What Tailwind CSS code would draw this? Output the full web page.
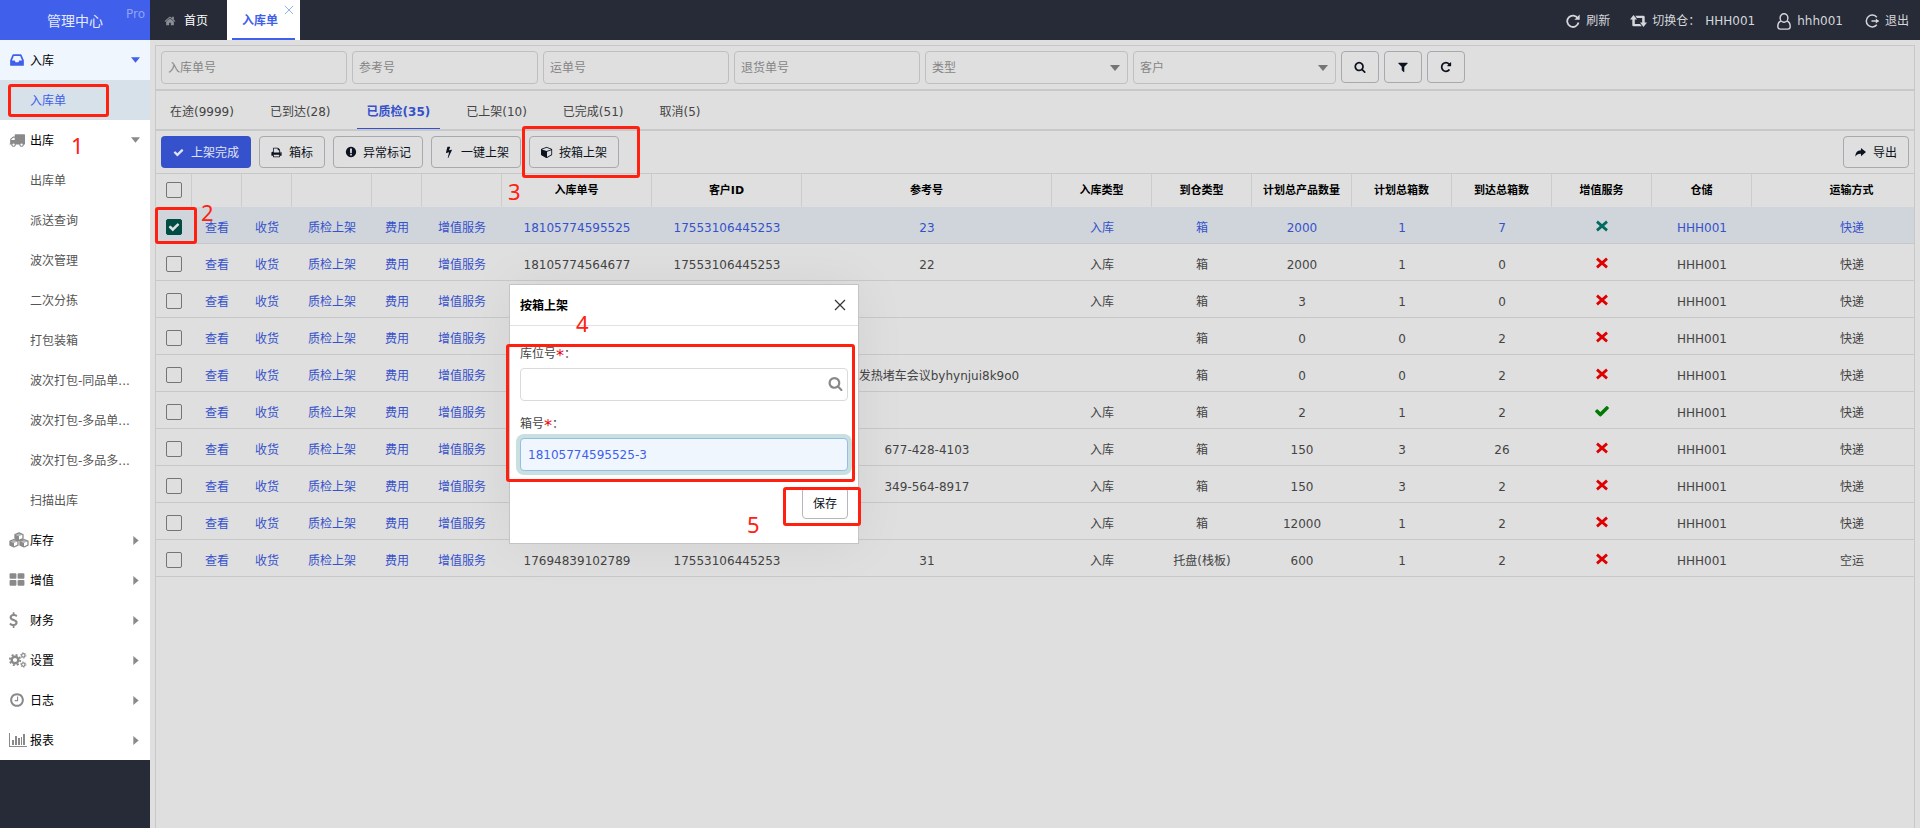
<!DOCTYPE html>
<html lang="zh-CN">
<head>
<meta charset="utf-8">
<title>管理中心</title>
<script src="https://cdn.jsdelivr.net/npm/@tailwindcss/browser@4"></script>
</head>
<body class="relative flex h-screen overflow-hidden bg-[#dfdfdf] font-['DejaVu_Sans','Noto_Sans_CJK_SC',sans-serif] text-xs text-[#444]">

<svg class="hidden" aria-hidden="true">
  <symbol id="i-home" viewBox="0 0 1792 1792"><path d="M1472 992v480q0 26-19 45t-45 19h-384v-384h-256v384h-384q-26 0-45-19t-19-45v-480q0-1 .5-3t.5-3l575-474 575 474q1 2 1 6zm223-69l-62 74q-8 9-21 11h-3q-13 0-21-7l-692-577-692 577q-12 8-24 7-13-2-21-11l-62-74q-8-10-7-23.5t11-21.5l719-599q32-26 76-26t76 26l244 204v-195q0-14 9-23t23-9h192q14 0 23 9t9 23v408l219 182q10 8 11 21.5t-7 23.5z"/></symbol>
  <symbol id="i-inbox" viewBox="0 0 1792 1792"><path d="M1151 960h316q-1-3-2.5-8t-2.5-8l-212-496h-708l-212 496q-1 2-2.5 8t-2.5 8h316l95 192h320zm513 30v482q0 26-19 45t-45 19h-1408q-26 0-45-19t-19-45v-482q0-62 25-123l238-552q10-25 36.5-42t52.5-17h832q26 0 52.5 17t36.5 42l238 552q25 61 25 123z"/></symbol>
  <symbol id="i-truck" viewBox="0 0 1792 1792"><path d="M640 1408q0-52-38-90t-90-38-90 38-38 90 38 90 90 38 90-38 38-90zm-384-512h384v-256h-158q-13 0-22 9l-195 195q-9 9-9 22v30zm1280 512q0-52-38-90t-90-38-90 38-38 90 38 90 90 38 90-38 38-90zm256-1088v1024q0 15-4 26.5t-13.5 18.5-16.5 11.5-23.5 6-22.5 2-25.5 0-22.5-.5q0 106-75 181t-181 75-181-75-75-181h-384q0 106-75 181t-181 75-181-75-75-181h-64q-3 0-22.5.5t-25.5 0-22.5-2-23.5-6-16.5-11.5-13.5-18.5-4-26.5q0-26 19-45t45-19v-320q0-8-.5-35t0-38 2.5-34.5 6.5-37 14-30.5 22.5-30l198-198q19-19 50.5-32t58.5-13h160v-192q0-26 19-45t45-19h1024q26 0 45 19t19 45z"/></symbol>
  <symbol id="i-cubes" viewBox="0 0 20 16"><g fill="none" stroke="currentColor" stroke-width="1.3" stroke-linejoin="round"><path d="M10 .8l4 1.7v4l-4 1.8-4-1.8v-4zM5 7.5l4 1.7v4L5 15l-4-1.8v-4zM15 7.5l4 1.7v4L15 15l-4-1.8v-4z"/></g><path d="M10 1l4 1.6-4 1.7-4-1.7zM5 7.7l4 1.6L5 11 1 9.300zM15 7.700l4 1.600-4 1.700-4-1.700z" opacity=".6"/><path d="M6 2.600l4 1.700v4L6 6.500zM1 9.300L5 11v4l-4-1.800zM11 9.300l4 1.700v4l-4-1.800z"/></symbol>
  <symbol id="i-th" viewBox="0 0 1792 1792"><path d="M832 1024v384q0 52-38 90t-90 38h-512q-52 0-90-38t-38-90v-384q0-52 38-90t90-38h512q52 0 90 38t38 90zm0-768v384q0 52-38 90t-90 38h-512q-52 0-90-38t-38-90v-384q0-52 38-90t90-38h512q52 0 90 38t38 90zm896 768v384q0 52-38 90t-90 38h-512q-52 0-90-38t-38-90v-384q0-52 38-90t90-38h512q52 0 90 38t38 90zm0-768v384q0 52-38 90t-90 38h-512q-52 0-90-38t-38-90v-384q0-52 38-90t90-38h512q52 0 90 38t38 90z"/></symbol>
  <symbol id="i-usd" viewBox="384 0 1024 1792"><path d="M1362 1185q0 153-99.500 263.500t-258.500 136.500v175q0 14-9 23t-23 9h-135q-13 0-22.500-9.500t-9.500-22.500v-175q-66-9-127.500-31t-101.500-44.500-74-48-46.500-37.500-17.500-18q-17-21-2-41l103-135q7-10 23-12 15-2 24 9l2 2q113 99 243 125 37 8 74 8 81 0 142.500-43t61.500-122q0-28-15-53t-33.500-42-58.500-37.500-66-32-80-32.500q-39-16-61.500-25t-61.500-26.500-62.500-31-56.500-35.500-53.500-42.500-43.500-49-35.500-58-21-66.500-8.500-78q0-138 98-242t255-134v-180q0-13 9.500-22.500t22.500-9.500h135q14 0 23 9t9 23v176q57 6 110.500 23t87 33.500 63.500 37.500 39 29 15 14q17 18 5 38l-81 146q-8 15-23 16-14 3-27-7-3-3-14.500-12t-39-26.500-58.500-32-74.500-26-85.500-11.500q-95 0-155 43t-60 111q0 26 8.500 48t29.500 41.500 39.500 33 56 31 60.500 27 70 27.500q53 20 81 31.500t76 35 75.500 42.500 62 50 53 63.500 31.500 76.500 13 94z"/></symbol>
  <symbol id="i-cogs" viewBox="0 0 18 16"><g fill="none" stroke="currentColor"><circle cx="6" cy="8" r="3.300" stroke-width="2.400"/><circle cx="6" cy="8" r="5.200" stroke-width="1.800" stroke-dasharray="2.040 2.040"/><circle cx="14.300" cy="3.400" r="1.700" stroke-width="1.200"/><circle cx="14.300" cy="3.400" r="2.700" stroke-width="1" stroke-dasharray="1.200 1.627"/><circle cx="14.300" cy="12.600" r="1.700" stroke-width="1.200"/><circle cx="14.300" cy="12.600" r="2.700" stroke-width="1" stroke-dasharray="1.200 1.627"/></g></symbol>
  <symbol id="i-clock" viewBox="0 0 1792 1792"><path d="M1024 544v448q0 14-9 23t-23 9h-320q-14 0-23-9t-9-23v-64q0-14 9-23t23-9h224v-352q0-14 9-23t23-9h64q14 0 23 9t9 23zm416 352q0-148-73-273t-198-198-273-73-273 73-198 198-73 273 73 273 198 198 273 73 273-73 198-198 73-273zm224 0q0 209-103 385.500t-279.500 279.500-385.500 103-385.500-103-279.500-279.500-103-385.500 103-385.500 279.500-279.500 385.500-103 385.500 103 279.500 279.500 103 385.500z"/></symbol>
  <symbol id="i-chart" viewBox="0 0 18 16"><path d="M0 1h1v13h17v1H0zM3 8h2v5H3zM6 4h2v9H6zM9 6h2v7H9zM12 5h1v8h-1zM14 2h2v11h-2z"/></symbol>
  <symbol id="i-check" viewBox="0 0 1792 1792"><path d="M1671 566q0 40-28 68l-724 724-136 136q-28 28-68 28t-68-28l-136-136-362-362q-28-28-28-68t28-68l136-136q28-28 68-28t68 28l294 295 656-657q28-28 68-28t68 28l136 136q28 28 28 68z"/></symbol>
  <symbol id="i-times" viewBox="0 0 14 14"><path d="M2.600 3.200l8.800 7.600M11.400 3.200L2.600 10.800" fill="none" stroke="currentColor" stroke-width="2.400"/></symbol>
  <symbol id="i-print" viewBox="0 0 1792 1792"><path d="M448 1536h896v-256h-896v256zm0-640h896v-384h-160q-40 0-68-28t-28-68v-160h-640v640zm1152 64q0-26-19-45t-45-19-45 19-19 45 19 45 45 19 45-19 19-45zm128 0v416q0 13-9.500 22.500t-22.500 9.500h-224v160q0 40-28 68t-68 28h-960q-40 0-68-28t-28-68v-160h-224q-13 0-22.500-9.500t-9.500-22.500v-416q0-79 56.500-135.500t135.500-56.500h64v-544q0-40 28-68t68-28h672q40 0 88 20t76 48l152 152q28 28 48 76t20 88v256h64q79 0 135.500 56.500t56.500 135.500z"/></symbol>
  <symbol id="i-alert" viewBox="0 0 1792 1792"><path d="M896 128q209 0 385.500 103t279.500 279.500 103 385.500-103 385.500-279.500 279.500-385.500 103-385.500-103-279.500-279.500-103-385.500 103-385.500 279.500-279.500 385.500-103zm128 1247v-190q0-14-9-23.500t-22-9.500h-192q-13 0-23 10t-10 23v190q0 13 10 23t23 10h192q13 0 22-9.500t9-23.500zm-2-344l18-621q0-12-10-18-10-8-24-8h-220q-14 0-24 8-10 6-10 18l17 621q0 10 10 17.500t24 7.500h185q14 0 23.500-7.500t10.500-17.500z"/></symbol>
  <symbol id="i-bolt" viewBox="0 0 1792 1792"><path d="M1333 566q18 20 7 44l-540 1157q-13 25-42 25-4 0-14-2-17-5-25.500-19t-4.500-30l197-808-406 101q-4 1-12 1-18 0-31-11-18-15-13-39l201-825q4-14 16-23t28-9h328q19 0 32 12.500t13 29.500q0 8-5 18l-171 463 396-98q8-2 12-2 19 0 34 15z"/></symbol>
  <symbol id="i-cube" viewBox="0 0 1792 1792"><path d="M896 1629l640-349v-636l-640 233v752zm-64-865l698-254-698-254-698 254zm832-252v768q0 35-18 65t-49 47l-704 384q-28 16-61 16t-61-16l-704-384q-31-17-49-47t-18-65v-768q0-40 23-73t61-47l704-256q22-8 44-8t44 8l704 256q38 14 61 47t23 73z"/></symbol>
  <symbol id="i-share" viewBox="0 0 12 12"><path d="M6.500 1L12 5.500 6.500 10V7.300C3.500 7.200 1.800 8 .5 10.500.3 6.500 2.500 3.800 6.500 3.600z"/></symbol>
  <symbol id="i-search" viewBox="0 0 1792 1792"><path d="M1216 832q0-185-131.500-316.500t-316.500-131.500-316.500 131.500-131.500 316.500 131.500 316.500 316.500 131.500 316.500-131.500 131.500-316.500zm512 832q0 52-38 90t-90 38q-54 0-90-38l-343-342q-179 124-399 124-143 0-273.500-55.500t-225-150-150-225-55.500-273.500 55.500-273.500 150-225 225-150 273.500-55.500 273.500 55.500 225 150 150 225 55.500 273.500q0 220-124 399l343 343q37 37 37 90z"/></symbol>
  <symbol id="i-filter" viewBox="0 0 1792 1792"><path d="M1595 295q17 41-14 70l-493 493v742q0 42-39 59-13 5-25 5-27 0-45-19l-256-256q-19-19-19-45v-486l-493-493q-31-29-14-70 17-39 59-39h1280q42 0 59 39z"/></symbol>
  <symbol id="i-repeat" viewBox="0 0 1792 1792"><path d="M1664 256v448q0 26-19 45t-45 19h-448q-42 0-59-40-17-39 14-69l138-138q-148-137-349-137-104 0-198.500 40.500t-163.500 109.500-109.500 163.500-40.500 198.500 40.500 198.500 109.500 163.500 163.500 109.500 198.500 40.500q119 0 225-52t179-147q7-10 23-12 15 0 25 9l137 138q9 8 9.500 20.500t-7.500 22.500q-109 132-264 204.500t-327 72.500q-156 0-298-61t-245-164-164-245-61-298 61-298 164-245 245-164 298-61q147 0 284.500 55.500t244.500 156.500l130-129q29-31 70-14 39 17 39 59z"/></symbol>
  <symbol id="i-refresh" viewBox="0 0 14 14"><path d="M11.800 4.300A5.700 5.700 0 1 0 12.500 8.500" fill="none" stroke="currentColor" stroke-width="1.800"/><path d="M13.700.5v5.300H8.400z"/></symbol>
  <symbol id="i-retweet" viewBox="0 0 17 12"><path d="M3.500 0L7 4.500H4.800V9H10l1.800 2.300H3.500q-1.200 0-1.200-1.200V4.500H0zM13.500 12L10 7.500h2.200V3H7L5.200.7h8.300q1.200 0 1.200 1.200v5.600H17z"/></symbol>
  <symbol id="i-user" viewBox="0 0 14 17"><g fill="none" stroke="currentColor" stroke-width="1.400"><ellipse cx="7" cy="5" rx="3.900" ry="4.200"/><path d="M3.800 8C1.500 9 .8 11 .8 13.500q0 2.600 2.600 2.600h7.200q2.600 0 2.600-2.600C13.200 11 12.500 9 10.200 8"/></g></symbol>
  <symbol id="i-exit" viewBox="0 0 14 14"><path d="M11.800 3.300A5.900 5.900 0 1 0 11.800 10.700M6.500 7h7" fill="none" stroke="currentColor" stroke-width="1.500"/><path d="M10.800 4.500L14 7l-3.200 2.500z"/></symbol>
  <symbol id="i-close" viewBox="0 0 12 12"><path d="M1 1l10 10M11 1L1 11" fill="none" stroke="currentColor" stroke-width="1.200"/></symbol>
  <symbol id="i-down" viewBox="0 0 10 6"><path d="M0 0h10L5 6z"/></symbol>
  <symbol id="i-right" viewBox="0 0 6 10"><path d="M0 0v10l6-5z"/></symbol>
</svg>

<aside class="flex w-[150px] shrink-0 flex-col bg-[#262b37]">
  <div class="relative flex h-10 items-center justify-center bg-[#405fea] pt-[2px] text-sm text-[#e4e9fb]">
    <span>管理中心</span>
    <span class="absolute top-1 right-[5px] text-xs leading-5 text-[#8ea3f3]">Pro</span>
  </div>
  <nav id="menu" class="bg-white text-black"></nav>
</aside>

<div class="flex min-w-0 flex-1 flex-col">
  <header class="flex h-10 shrink-0 justify-between bg-[#262b37] text-[#d5d7da]">
    <nav class="flex">
      <a href="#" class="flex w-[77px] items-center gap-2 pt-[2px] pl-[14px] text-white"><svg class="size-3 fill-[#8a8d94]"><use href="#i-home"/></svg>首页</a>
      <a href="#" class="relative flex w-[73px] items-center justify-center bg-white px-[5px] font-bold text-[#405fea]"><span class="flex h-full flex-1 items-center border-b-2 border-[#405fea] pt-1 pl-[10px]">入库单</span><svg class="absolute top-[5px] right-[6px] size-[10px] text-[#8fb2f0]"><use href="#i-close"/></svg></a>
    </nav>
    <div class="flex items-center pt-[2px] pr-[11px]">
      <a href="#" class="flex items-center gap-[6px]"><svg class="size-[14px] fill-current"><use href="#i-refresh"/></svg>刷新</a>
      <a href="#" class="ml-5 flex items-center gap-[5px]"><svg class="h-3 w-[17px] fill-current"><use href="#i-retweet"/></svg><span>切换仓：</span><span>HHH001</span></a>
      <a href="#" class="ml-[22px] flex items-center gap-[6px]"><svg class="h-[17px] w-[14px]"><use href="#i-user"/></svg>hhh001</a>
      <a href="#" class="ml-[22px] flex items-center gap-[6px]"><svg class="size-[14px] fill-current"><use href="#i-exit"/></svg>退出</a>
    </div>
  </header>

  <main class="flex min-h-0 flex-1 flex-col px-[5px] pt-[5px]">
    <section class="min-h-0 flex-1 overflow-hidden border-x border-t border-[#c8c8c8]">
      <form class="flex h-[45px] items-start gap-[5px] border-b-2 border-[#c8c8c8] px-[5px] pt-[5px]">
        <input aria-label="入库单号" placeholder="入库单号" class="h-[33px] w-[186px] rounded border border-[#bfbfbf] px-[6px] placeholder-[#858585]">
        <input aria-label="参考号" placeholder="参考号" class="h-[33px] w-[186px] rounded border border-[#bfbfbf] px-[6px] placeholder-[#858585]">
        <input aria-label="运单号" placeholder="运单号" class="h-[33px] w-[186px] rounded border border-[#bfbfbf] px-[6px] placeholder-[#858585]">
        <input aria-label="退货单号" placeholder="退货单号" class="h-[33px] w-[186px] rounded border border-[#bfbfbf] px-[6px] placeholder-[#858585]">
        <div class="relative"><select aria-label="类型" class="h-[33px] w-[203px] appearance-none rounded border border-[#bfbfbf] px-[6px] text-[#858585]"><option>类型</option></select><svg class="pointer-events-none absolute top-[14px] right-2 h-[6px] w-[10px] fill-[#757575]"><use href="#i-down"/></svg></div>
        <div class="relative"><select aria-label="客户" class="h-[33px] w-[203px] appearance-none rounded border border-[#bfbfbf] px-[6px] text-[#858585]"><option>客户</option></select><svg class="pointer-events-none absolute top-[14px] right-2 h-[6px] w-[10px] fill-[#757575]"><use href="#i-down"/></svg></div>
        <button type="button" aria-label="搜索" class="flex h-8 w-[38px] items-center justify-center rounded border border-[#a7a9ae]"><svg class="size-3 fill-[#0c1220]"><use href="#i-search"/></svg></button>
        <button type="button" aria-label="筛选" class="flex h-8 w-[38px] items-center justify-center rounded border border-[#a7a9ae]"><svg class="size-3 fill-[#0c1220]"><use href="#i-filter"/></svg></button>
        <button type="button" aria-label="重置" class="flex h-8 w-[38px] items-center justify-center rounded border border-[#a7a9ae]"><svg class="size-3 fill-[#0c1220]"><use href="#i-repeat"/></svg></button>
      </form>

      <nav class="flex h-10 gap-4 border-b-2 border-[#c8c8c8] pl-1">
        <a href="#" class="flex items-center px-[10px] pt-[3px]">在途(9999)</a>
        <a href="#" class="flex items-center px-[10px] pt-[3px]">已到达(28)</a>
        <a href="#" class="flex items-center border-b border-[#3651cc] px-[10px] pt-1 font-bold text-[#3651cc]">已质检(35)</a>
        <a href="#" class="flex items-center px-[10px] pt-[3px]">已上架(10)</a>
        <a href="#" class="flex items-center px-[10px] pt-[3px]">已完成(51)</a>
        <a href="#" class="flex items-center px-[10px] pt-[3px]">取消(5)</a>
      </nav>

      <div class="flex h-[43px] items-start gap-2 border-b border-[#c8c8c8] px-[5px] pt-[5px] text-[#0c1220]">
        <button class="flex h-8 items-center gap-[7px] rounded bg-[#3651cc] px-3 text-[#e0e4f5]"><svg class="size-[11px] fill-current"><use href="#i-check"/></svg><span class="pt-[2px]">上架完成</span></button>
        <button class="flex h-8 items-center gap-[7px] rounded border border-[#a7a9ae] px-[11px]"><svg class="size-[11px] fill-current"><use href="#i-print"/></svg><span class="pt-[2px]">箱标</span></button>
        <button class="flex h-8 items-center gap-[6px] rounded border border-[#a7a9ae] px-[11px]"><svg class="size-3 fill-current"><use href="#i-alert"/></svg><span class="pt-[2px]">异常标记</span></button>
        <button class="flex h-8 items-center gap-[6px] rounded border border-[#a7a9ae] px-[11px]"><svg class="size-3 fill-current"><use href="#i-bolt"/></svg><span class="pt-[2px]">一键上架</span></button>
        <button class="flex h-8 items-center gap-[6px] rounded border border-[#a7a9ae] px-[11px]"><svg class="size-3 fill-current"><use href="#i-cube"/></svg><span class="pt-[2px]">按箱上架</span></button>
        <button class="ml-auto flex h-8 items-center gap-[7px] rounded border border-[#a7a9ae] px-[11px]"><svg class="size-[11px] fill-current"><use href="#i-share"/></svg><span class="pt-[2px]">导出</span></button>
      </div>

      <table class="w-[1796px] table-fixed border-separate border-spacing-0 text-center whitespace-nowrap">
        <colgroup><col class="w-9"><col class="w-[50px]"><col class="w-[50px]"><col class="w-20"><col class="w-[50px]"><col class="w-20"><col class="w-[150px]"><col class="w-[150px]"><col class="w-[250px]"><col class="w-[100px]"><col class="w-[100px]"><col class="w-[100px]"><col class="w-[100px]"><col class="w-[100px]"><col class="w-[100px]"><col class="w-[100px]"><col class="w-[200px]"></colgroup>
        <thead><tr id="head" class="h-[33px] text-[11px] text-black"></tr></thead>
        <tbody id="rows"></tbody>
      </table>
    </section>
  </main>
</div>

<div role="dialog" aria-labelledby="dlg-title" class="absolute top-[284px] left-[509px] w-[350px] border border-[#c4c4c4] bg-white shadow-[1px_1px_50px_rgba(0,0,0,0.06)]">
  <div class="flex h-[41px] items-center justify-between border-b border-[#e2e2e2] pr-3 pl-[10px] text-black">
    <h2 id="dlg-title" class="pt-[2px] font-bold">按箱上架</h2>
    <button aria-label="关闭" class="text-[#333]"><svg class="size-3"><use href="#i-close"/></svg></button>
  </div>
  <form class="px-[10px] pt-[18px] pb-[24px]">
    <label for="loc" class="flex h-6 leading-5">库位号<span class="text-base leading-6 text-red-600">*</span>：</label>
    <div class="relative">
      <input id="loc" class="block h-[33px] w-full rounded border border-[#dadada] px-2">
      <svg class="absolute top-2 right-[5px] size-[15px] fill-[#888]"><use href="#i-search"/></svg>
    </div>
    <label for="box" class="mt-[13px] flex h-6 leading-5">箱号<span class="text-base leading-6 text-red-600">*</span>：</label>
    <input id="box" value="18105774595525-3" class="block h-[33px] w-full rounded border border-[#95bde5] bg-[#f0f6fe] px-[7px] text-[#405fea] ring-4 ring-[#c8e0df]">
    <div class="mt-4 flex justify-end"><button type="button" class="h-8 w-[46px] rounded border border-[#b5b7bd] pt-[2px] text-[#0c1220]">保存</button></div>
  </form>
</div>

<!-- step markers -->
<div class="pointer-events-none font-['Noto_Sans',sans-serif] text-[22px] leading-[22px] text-[#ff2010]">
  <div class="absolute top-[84px] left-2 h-[33px] w-[101px] rounded-[3px] border-3 border-[#ff2010]"></div>
  <div class="absolute top-[207px] left-[155px] h-[37px] w-[42px] rounded-[3px] border-3 border-[#ff2010]"></div>
  <div class="absolute top-[126px] left-[522px] h-[52px] w-[118px] rounded-[3px] border-3 border-[#ff2010]"></div>
  <div class="absolute top-[344px] left-[506px] h-[138px] w-[349px] rounded-[3px] border-3 border-[#ff2010]"></div>
  <div class="absolute top-[487px] left-[783px] h-[39px] w-[78px] rounded-[3px] border-3 border-[#ff2010]"></div>
  <span class="absolute top-[134px] left-[71px]">1</span>
  <span class="absolute top-[201px] left-[201px]">2</span>
  <span class="absolute top-[180px] left-[508px]">3</span>
  <span class="absolute top-[312px] left-[576px]">4</span>
  <span class="absolute top-[513px] left-[747px]">5</span>
</div>

<script>
const icon = (id, cls) => `<svg class="${cls}"><use href="#i-${id}"/></svg>`;

const menu = [
  ['inbox', '入库', 'active', ['入库单']],
  ['truck', '出库', 'open', ['出库单', '派送查询', '波次管理', '二次分拣', '打包装箱', '波次打包-同品单...', '波次打包-多品单...', '波次打包-多品多...', '扫描出库']],
  ['cubes', '库存'], ['th', '增值'], ['usd', '财务'], ['cogs', '设置'], ['clock', '日志'], ['chart', '报表'],
];
const size = {cubes: 'h-4 w-5', cogs: 'h-4 w-[18px]', chart: 'h-4 w-[18px]', usd: 'h-4 w-[9px]'};
document.getElementById('menu').innerHTML = menu.map(([ic, name, state, kids]) => {
  const on = state === 'active';
  const arrow = state ? icon('down', 'ml-auto h-[6px] w-[9px] fill-current') : icon('right', 'ml-auto mr-px h-[9px] w-[6px] fill-current');
  return `<a href="#" class="flex h-10 items-center pr-[10px] pl-[9px] ${on ? 'bg-[#f0f6fe] text-[#405fea]' : 'text-[#8a8a8a]'}"><span class="flex w-[21px]">${icon(ic, (size[ic] || 'size-4') + ' fill-current')}</span><span class="pt-[2px] text-black">${name}</span>${arrow}</a>`
    + (kids || []).map(k => `<a href="#" class="flex h-10 items-center pt-[2px] pl-[30px] ${on ? 'bg-[#d6e1ea] text-[#405fea]' : 'text-[#555]'}">${k}</a>`).join('');
}).join('');

const cb = (label, on) => `<span class="relative inline-flex align-middle"><input type="checkbox" aria-label="${label}" ${on ? 'checked' : ''} class="size-4 appearance-none rounded-[2px] border ${on ? 'border-[#004d44] bg-[#004d44]' : 'border-[#757575]'}">${on ? icon('check', 'pointer-events-none absolute top-[2px] left-[2px] size-3 fill-[#dfdfdf]') : ''}</span>`;

const heads = ['', '', '', '', '', '', '入库单号', '客户ID', '参考号', '入库类型', '到仓类型', '计划总产品数量', '计划总箱数', '到达总箱数', '增值服务', '仓储', '运输方式'];
document.getElementById('head').innerHTML = heads.map((h, i) => `<th class="border-r border-b border-r-[#cccccc] border-b-[#dfdfdf] font-bold ${i ? 'pt-[2px]' : ''}">${i ? h : cb('全选')}</th>`).join('');

const data = [
  ['18105774595525', '17553106445253', '23', '入库', '箱', '2000', '1', '7', 'x', 'HHH001', '快递'],
  ['18105774564677', '17553106445253', '22', '入库', '箱', '2000', '1', '0', 'x', 'HHH001', '快递'],
  ['', '', '', '入库', '箱', '3', '1', '0', 'x', 'HHH001', '快递'],
  ['', '', '', '', '箱', '0', '0', '2', 'x', 'HHH001', '快递'],
  ['', '', '发热堵车会议byhynjui8k9o0', '', '箱', '0', '0', '2', 'x', 'HHH001', '快递'],
  ['', '', '', '入库', '箱', '2', '1', '2', 'v', 'HHH001', '快递'],
  ['', '', '677-428-4103', '入库', '箱', '150', '3', '26', 'x', 'HHH001', '快递'],
  ['', '', '349-564-8917', '入库', '箱', '150', '3', '2', 'x', 'HHH001', '快递'],
  ['', '', '', '入库', '箱', '12000', '1', '2', 'x', 'HHH001', '快递'],
  ['17694839102789', '17553106445253', '31', '入库', '托盘(栈板)', '600', '1', '2', 'x', 'HHH001', '空运'],
];
const links = ['查看', '收货', '质检上架', '费用', '增值服务'];
document.getElementById('rows').innerHTML = data.map((r, n) => {
  const on = n === 0;
  const td = (c, extra = 'pt-[6px]') => `<td class="border-b border-[#c8c8c8] ${extra}">${c}</td>`;
  const mark = v => v === 'v' ? icon('check', 'inline size-4 fill-[#007a00]') : icon('times', on ? 'inline size-4 text-[#006b5e]' : 'inline size-4 text-[#df0000]');
  return `<tr class="h-[37px] ${on ? 'bg-[#cfd5da] text-[#3651cc]' : ''}">`
    + td(cb('选择第' + (n + 1) + '行', on), 'pt-1 pr-px')
    + links.map(l => td(`<a href="#" class="text-[#3651cc]">${l}</a>`)).join('')
    + r.map((c, i) => i === 8 ? td(mark(c), 'pt-[2px]') : td(c, c.length > 16 ? 'pt-[6px] pl-6' : 'pt-[6px]')).join('') + '</tr>';
}).join('');
</script>
</body>
</html>
